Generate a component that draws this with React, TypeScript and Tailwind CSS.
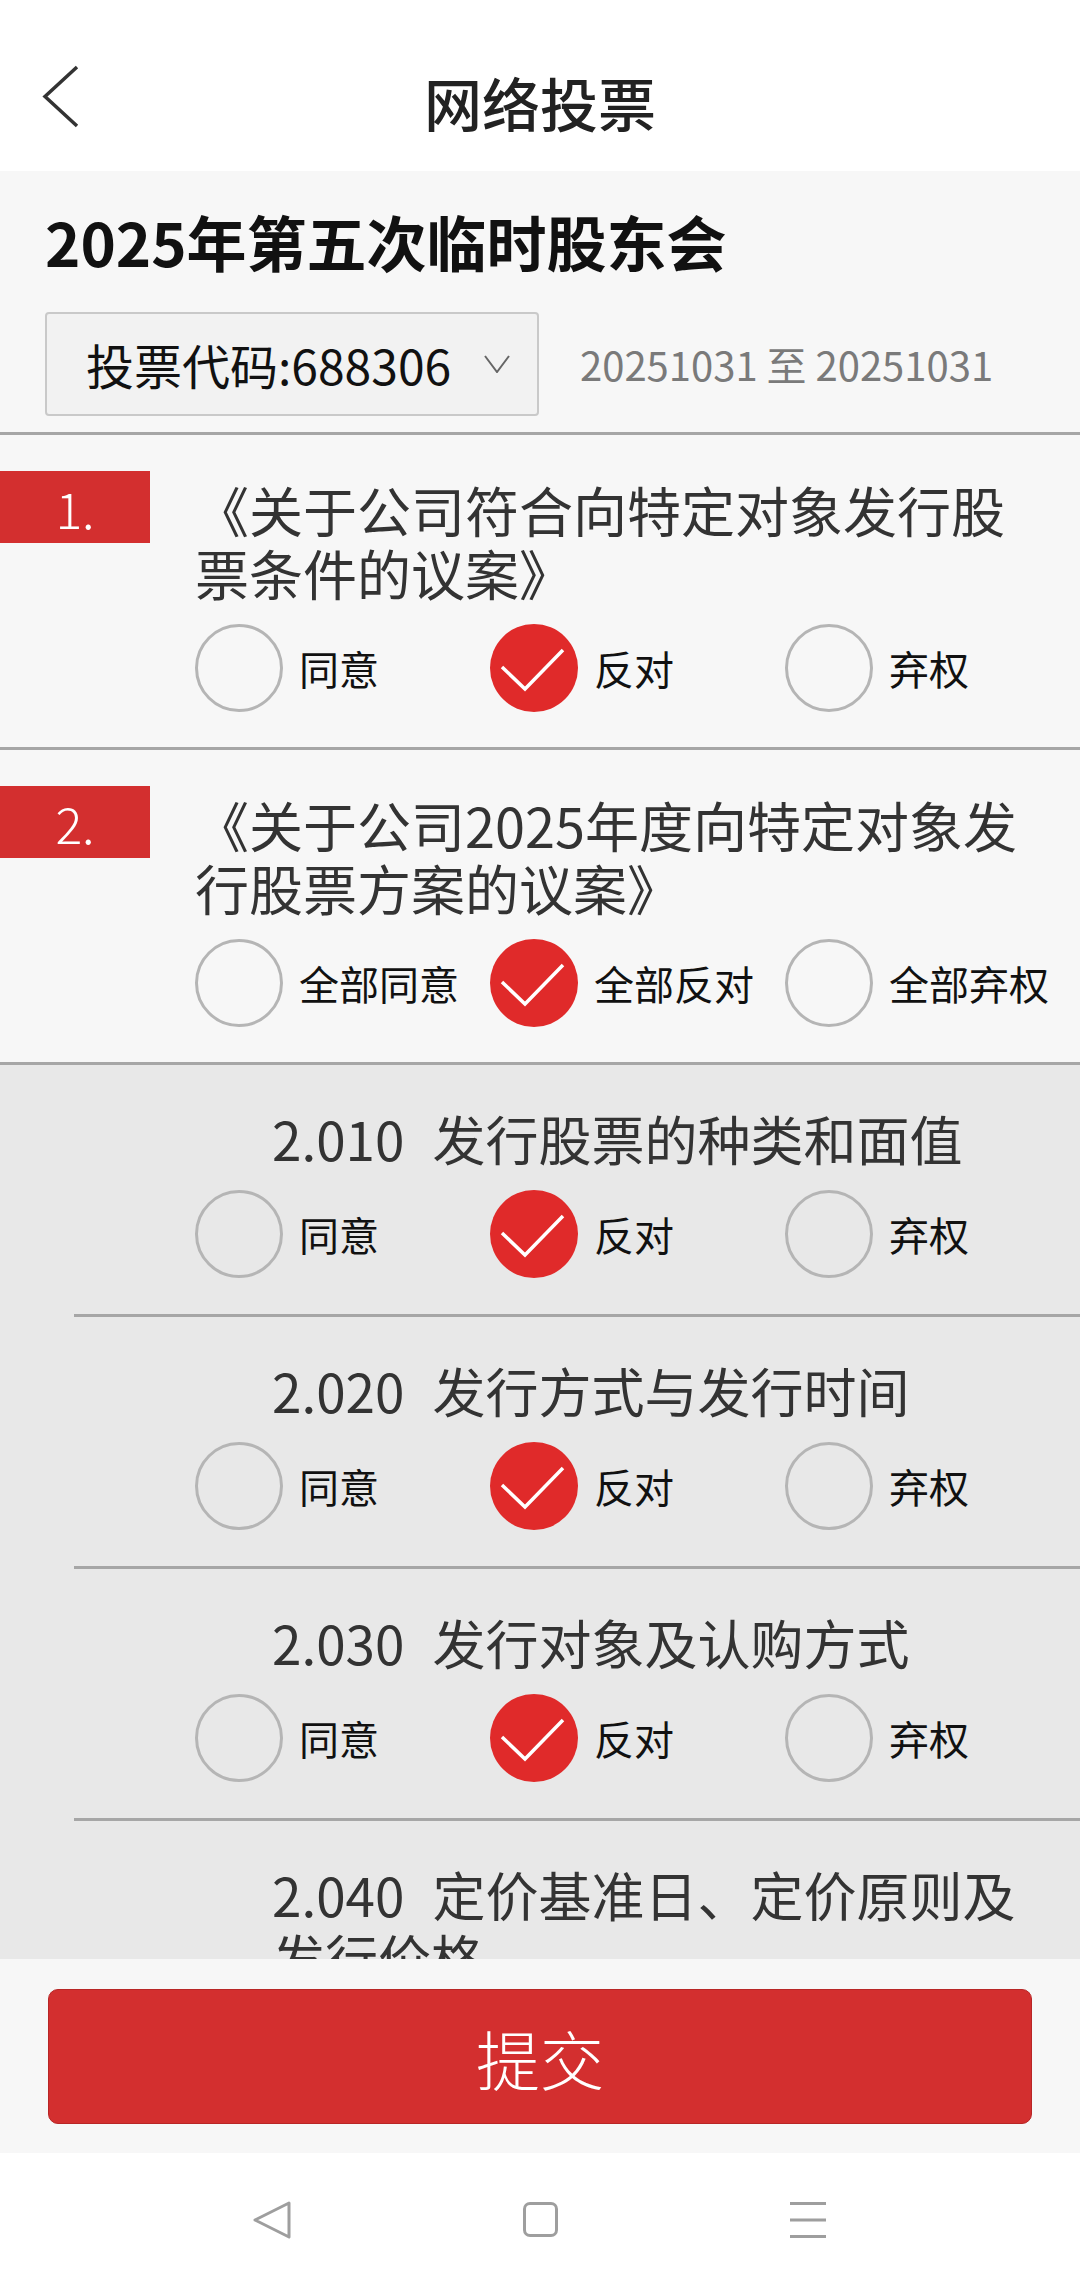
import React from "react";

type RadioProps = { label: string; checked?: boolean };

function Radio({ label, checked }: RadioProps) {
  return (
    <div className="flex w-[295px] shrink-0 items-center gap-[16px]">
      {checked ? (
        <span className="flex h-[88px] w-[88px] shrink-0 items-center justify-center rounded-full bg-[#e02a2a]">
          <svg viewBox="0 0 88 88" className="h-[88px] w-[88px]">
            <polyline points="12,43 35,65 73,26" fill="none" stroke="#ffffff" strokeWidth="3.5" />
          </svg>
        </span>
      ) : (
        <span className="h-[88px] w-[88px] shrink-0 rounded-full border-[3px] border-[#b5b5b5]" />
      )}
      <span className="whitespace-nowrap text-[40px] leading-none text-[#111]">{label}</span>
    </div>
  );
}

function Options({ labels, selected }: { labels: string[]; selected: number }) {
  return (
    <div className="mt-[20px] flex">
      {labels.map((l, i) => (
        <Radio key={l} label={l} checked={i === selected} />
      ))}
    </div>
  );
}

function Item({ no, title, options }: { no: string; title: string; options: string[] }) {
  return (
    <section className="flex border-b-[3px] border-[#a6a6a6] pb-[35px]">
      <div className="w-[195px] shrink-0 pt-[36px]">
        <div className="flex h-[72px] w-[150px] items-center justify-center bg-[#d32f2f] text-[50px] font-light leading-none text-white">
          {no}
        </div>
      </div>
      <div className="flex-1 pt-[43px]">
        <p className="w-[840px] text-[54px] leading-[63px] text-[#333]">{title}</p>
        <Options labels={options} selected={1} />
      </div>
    </section>
  );
}

function SubItem({ code, title }: { code: string; title: string }) {
  return (
    <div className="ml-[74px] border-b-[3px] border-[#a6a6a6] pt-[42px] pb-[36px]">
      <p className="pl-[198px] pr-[40px] text-[53px] leading-[63px] text-[#333]">
        <span className="mr-[28px]">{code}</span>
        {title}
      </p>
      <div className="pl-[121px]">
        <Options labels={["同意", "反对", "弃权"]} selected={1} />
      </div>
    </div>
  );
}

const subItems = [
  { code: "2.010", title: "发行股票的种类和面值" },
  { code: "2.020", title: "发行方式与发行时间" },
  { code: "2.030", title: "发行对象及认购方式" },
  { code: "2.040", title: "定价基准日、定价原则及发行价格" },
];

export default function App() {
  return (
    <div className="flex h-[2286px] w-full flex-col overflow-hidden bg-[#f7f7f7] font-['Noto_Sans_CJK_SC','Noto_Sans',sans-serif]">
      {/* header */}
      <header className="grid h-[171px] shrink-0 grid-cols-[1fr_auto_1fr] items-start bg-white pt-[62px]">
        <div className="pl-[40px]">
          <svg viewBox="0 0 44 70" className="h-[70px] w-[44px]">
            <polyline points="37,5 5,34.5 37,64" fill="none" stroke="#333" strokeWidth="3.5" />
          </svg>
        </div>
        <h1 className="mt-[8px] text-[58px] font-medium leading-[64px] text-[#222]">网络投票</h1>
        <div />
      </header>

      <main className="flex-1 overflow-hidden">
        <section className="border-b-[3px] border-[#a6a6a6] px-[45px] pt-[35px] pb-[16px]">
          <h2 className="text-[60px] font-bold leading-[70px] text-[#111]">2025年第五次临时股东会</h2>
          <div className="mt-[36px] flex items-center gap-[41px]">
            <div className="flex h-[104px] w-[494px] items-center justify-between rounded-[4px] border-2 border-[#c9c9c9] bg-[#f2f2f2] pl-[39px] pr-[27px]">
              <span className="text-[48px] leading-none text-[#111]">投票代码:688306</span>
              <svg viewBox="0 0 26 18" className="h-[18px] w-[26px]">
                <polyline points="1,1 13,17 25,1" fill="none" stroke="#666" strokeWidth="2" />
              </svg>
            </div>
            <span className="text-[40px] leading-none text-[#7a7a7a]">20251031 至 20251031</span>
          </div>
        </section>

        <Item no="1." title="《关于公司符合向特定对象发行股票条件的议案》" options={["同意", "反对", "弃权"]} />
        <Item
          no="2."
          title="《关于公司2025年度向特定对象发行股票方案的议案》"
          options={["全部同意", "全部反对", "全部弃权"]}
        />

        <div className="bg-[#e8e8e8]">
          {subItems.map((s) => (
            <SubItem key={s.code} code={s.code} title={s.title} />
          ))}
        </div>
      </main>

      <footer className="shrink-0 bg-[#f7f7f7] px-[48px] pt-[30px] pb-[29px]">
        <button className="flex h-[135px] w-full items-center justify-center rounded-[10px] border border-[#b82626] bg-[#d32f2f] text-[64px] font-light text-white">
          提交
        </button>
      </footer>

      <nav className="flex h-[133px] shrink-0 items-center justify-center bg-white">
        <div className="flex w-[268px] justify-center">
          <svg viewBox="0 0 40 38" className="h-[38px] w-[40px]">
            <path d="M37 2 L3 19 L37 36 Z" fill="none" stroke="#9e9e9e" strokeWidth="3" strokeLinejoin="round" />
          </svg>
        </div>
        <div className="flex w-[268px] justify-center">
          <span className="h-[35px] w-[35px] rounded-[7px] border-[3px] border-[#9e9e9e]" />
        </div>
        <div className="flex w-[268px] justify-center">
          <svg viewBox="0 0 36 38" className="h-[38px] w-[36px]">
            <path d="M0 2.5 H36 M0 19 H36 M0 35.5 H36" stroke="#9e9e9e" strokeWidth="3" />
          </svg>
        </div>
      </nav>
    </div>
  );
}
